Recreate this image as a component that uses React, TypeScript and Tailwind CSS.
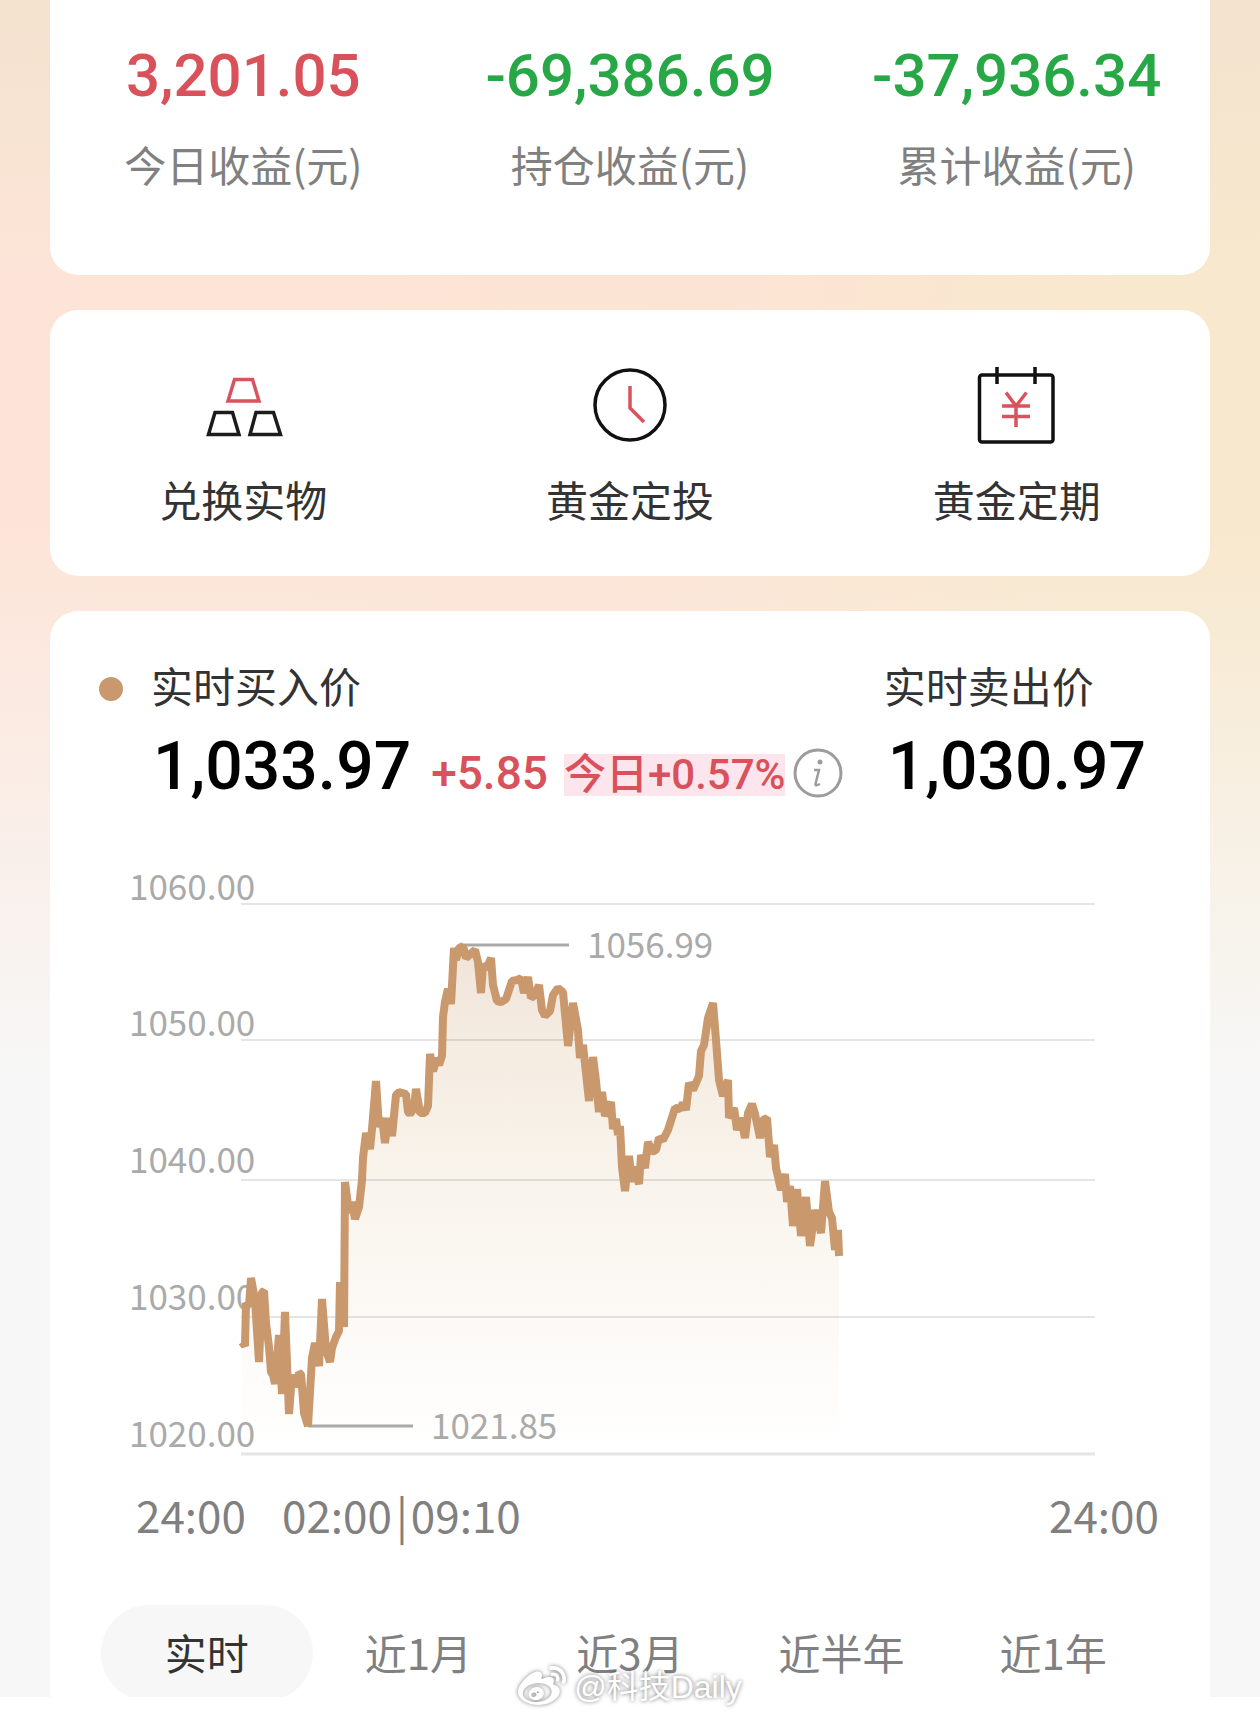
import { FaWeibo } from "react-icons/fa";

const stats = [
  { label: "今日收益(元)", value: "3,201.05", color: "text-[#d9515a]" },
  { label: "持仓收益(元)", value: "-69,386.69", color: "text-[#27a745]" },
  { label: "累计收益(元)", value: "-37,936.34", color: "text-[#27a745]" },
];

const ranges = ["实时", "近1月", "近3月", "近半年", "近1年"];

// y is the grid line, textY the baseline of its label
const gridLines = [
  { label: "1060.00", y: 904, textY: 900 },
  { label: "1050.00", y: 1040, textY: 1036 },
  { label: "1040.00", y: 1180, textY: 1173 },
  { label: "1030.00", y: 1317, textY: 1310 },
  { label: "1020.00", y: 1454, textY: 1447 },
];

const priceLine =
  "242,1342 245,1346 246,1303 249,1306 251,1278 255,1300 259,1362 262,1292 264,1291 266,1323 269,1347 271,1372 273,1375 275,1384 " +
  "279,1335 282,1394 285,1312 289,1414 292,1375 296,1387 299,1373 301,1374 304,1413 308,1426 312,1358 315,1343 319,1366 322,1299 " +
  "326,1350 330,1362 332,1348 336,1337 339,1331 340,1282 344,1327 345,1182 349,1213 352,1202 355,1219 359,1207 362,1180 363,1158 " +
  "366,1133 370,1149 372,1129 376,1081 379,1127 382,1118 385,1143 388,1118 392,1136 396,1095 399,1092 406,1094 408,1112 410,1114 " +
  "414,1108 416,1089 420,1113 425,1113 428,1106 430,1054 433,1071 437,1058 439,1065 442,1056 443,1017 445,1002 448,989 451,1004 " +
  "454,948 456,960 459,948 463,946 466,958 475,950 478,962 481,993 483,965 487,968 491,958 493,985 497,1001 501,1002 506,999 " +
  "512,981 517,980 521,978 524,993 528,977 531,998 535,995 539,985 542,1010 545,1016 550,1011 553,995 558,988 563,992 568,1046 " +
  "573,1003 578,1030 580,1058 583,1045 586,1073 589,1101 593,1057 596,1081 599,1112 602,1092 605,1116 611,1102 613,1129 616,1119 " +
  "618,1135 620,1126 622,1167 625,1191 629,1156 632,1182 634,1167 639,1184 641,1155 645,1168 648,1142 652,1152 656,1150 659,1138 " +
  "663,1140 668,1130 675,1108 680,1109 683,1103 686,1110 689,1083 693,1090 699,1076 701,1051 704,1045 708,1018 713,1003 716,1040 " +
  "719,1080 723,1096 728,1080 729,1118 734,1108 737,1130 741,1118 745,1138 748,1113 752,1104 755,1114 760,1138 763,1120 767,1118 " +
  "770,1157 774,1145 776,1168 781,1190 785,1174 787,1202 790,1186 793,1226 797,1189 801,1236 806,1197 810,1246 815,1210 821,1233 " +
  "825,1181 829,1212 832,1218 835,1250 838,1230 839,1256";

function GoldBarsIcon() {
  return (
    <svg viewBox="0 0 88 88" className="h-[88px] w-[88px]" fill="none" strokeWidth="3.5">
      <path d="M35.500 18.500H53.500L60 40H29Z" stroke="#d9535f" />
      <path d="M16 51.500H33.500L40 73.500H9.500Z" stroke="#1c1c1c" />
      <path d="M57 51.500H74.500L81.500 73.500H51Z" stroke="#1c1c1c" />
    </svg>
  );
}

function ClockIcon() {
  return (
    <svg viewBox="0 0 88 88" className="h-[88px] w-[88px]" fill="none" strokeWidth="3.5">
      <circle cx="44" cy="44" r="35" stroke="#111" />
      <path d="M44 25V47L58 61" stroke="#d9535f" />
    </svg>
  );
}

function CalendarIcon() {
  return (
    <svg viewBox="0 0 88 88" className="h-[88px] w-[88px]" fill="none" strokeWidth="3.5">
      <rect x="6.5" y="14" width="73.500" height="67" rx="2.500" stroke="#111" />
      <path d="M24 6V23M62 6V23" stroke="#111" />
      <path d="M33 31.500L43 45L53.500 31.500M43 45V66M29 45H57M29 55.500H57" stroke="#d9535f" />
    </svg>
  );
}

function InfoIcon() {
  return (
    <svg viewBox="0 0 50 50" className="h-[50px] w-[50px]" fill="none" stroke="#9c9c9c">
      <circle cx="25" cy="25" r="23" strokeWidth="3" />
      <circle cx="27" cy="14" r="2.5" fill="#9c9c9c" stroke="none" />
      <path d="M21 22H26L22.500 36Q22 38.500 27 36" strokeWidth="2.500" />
    </svg>
  );
}

const actions = [
  { label: "兑换实物", icon: <GoldBarsIcon /> },
  { label: "黄金定投", icon: <ClockIcon /> },
  { label: "黄金定期", icon: <CalendarIcon /> },
];

function PriceChart() {
  return (
    <svg
      viewBox="50 850 1160 700"
      className="block w-full font-['Noto_Sans_CJK_SC',sans-serif]"
      role="img"
      aria-label="实时金价走势"
    >
      <defs>
        <linearGradient id="area" x1="0" y1="945" x2="0" y2="1453" gradientUnits="userSpaceOnUse">
          <stop offset="0" stopColor="#c9986d" stopOpacity="0.26" />
          <stop offset="0.5" stopColor="#d2b078" stopOpacity="0.13" />
          <stop offset="1" stopColor="#d9b080" stopOpacity="0" />
        </linearGradient>
      </defs>

      <g fontSize="35" fill="#aaaaaa">
        {gridLines.map((line) => (
          <text key={line.label} x="129" y={line.textY}>
            {line.label}
          </text>
        ))}
        <text x="587" y="958">1056.99</text>
        <text x="431" y="1439">1021.85</text>
      </g>

      <polygon points={`241,1453 ${priceLine} 839,1453`} fill="url(#area)" />

      {gridLines.map((line, i) => (
        <line
          key={line.label}
          x1="241"
          x2="1095"
          y1={line.y}
          y2={line.y}
          stroke="#000"
          strokeOpacity="0.1"
          strokeWidth={i === 4 ? 3 : 2}
        />
      ))}

      <path d="M464 945H569M308 1426H413" stroke="#a9a9a9" strokeWidth="3" />
      <polyline points={priceLine} fill="none" stroke="#c9986d" strokeWidth="8" strokeLinejoin="bevel" />

      {/* Time axis */}
      <g fontSize="44" fill="#808080">
        <text x="136" y="1533">24:00</text>
        <text x="282" y="1533">
          02:00<tspan dx="4">|</tspan><tspan dx="3">09:10</tspan>
        </text>
        <text x="1049" y="1533">24:00</text>
      </g>
    </svg>
  );
}

export default function App() {
  return (
    <div className="relative bg-white font-['Noto_Sans_CJK_SC',sans-serif]">
      <main className="bg-[linear-gradient(to_bottom,transparent_0,transparent_520px,#f7f7f7_1080px),linear-gradient(to_bottom,#f3e3cf_0,#f3e3cf00_280px),linear-gradient(100deg,#fde4d8_0%,#fce4d4_50%,#f8e8cd_75%)] px-[50px]">
        {/* Earnings */}
        <dl className="grid h-[275px] grid-cols-3 rounded-b-[28px] bg-white pt-10 text-center">
          {stats.map((item) => (
            <div key={item.label} className="flex flex-col-reverse justify-end">
              <dt className="mt-1 text-[42px] leading-[96px] text-[#808080]">{item.label}</dt>
              <dd className={`font-['Roboto',sans-serif] text-[60px] leading-[72px] font-medium ${item.color}`}>
                {item.value}
              </dd>
            </div>
          ))}
        </dl>

        {/* Shortcuts */}
        <nav className="mt-[35px] grid h-[266px] grid-cols-3 rounded-[28px] bg-white pt-[51px]">
          {actions.map((item) => (
            <button key={item.label} type="button" className="flex flex-col items-center">
              {item.icon}
              <span className="mt-[18px] text-[42px] leading-[64px] text-[#333]">{item.label}</span>
            </button>
          ))}
        </nav>

        {/* Live price */}
        <section className="mt-[35px] rounded-t-[28px] bg-white pt-[42px]">
          <div className="flex justify-between pr-[64px] pl-[49px]">
            <div>
              <div className="flex items-center">
                <span className="mt-2 h-6 w-6 rounded-full bg-[#c9986d]"></span>
                <h2 className="ml-7 text-[42px] leading-[64px] text-[#333]">实时买入价</h2>
              </div>
              <div className="mt-1 ml-[54px] flex items-baseline font-['Roboto','Noto_Sans_CJK_SC',sans-serif] font-medium text-[#d9515a]">
                <span className="text-[66px] leading-[92px] text-black">1,033.97</span>
                <span className="ml-5 text-[46px]">+5.85</span>
                <span className="ml-4 bg-[#fce5ec] text-[42px] leading-[42px]">今日+0.57%</span>
                <button type="button" aria-label="说明" className="mt-3 ml-2 self-center">
                  <InfoIcon />
                </button>
              </div>
            </div>
            <div>
              <h2 className="text-[42px] leading-[64px] text-[#333]">实时卖出价</h2>
              <p className="mt-1 pl-1 font-['Roboto',sans-serif] text-[66px] leading-[92px] font-medium">1,030.97</p>
            </div>
          </div>

          <div className="mt-[37px]">
            <PriceChart />
          </div>

          <div className="mt-[55px] grid h-[92px] grid-cols-5 overflow-hidden px-[51px]">
            {ranges.map((range, i) => (
              <button
                key={range}
                type="button"
                className={`h-24 rounded-full pb-1 text-[42px] ${i === 0 ? "bg-[#f7f7f7] text-[#333]" : "text-[#808080]"}`}
              >
                {range}
              </button>
            ))}
          </div>
        </section>
      </main>
      <div className="h-6"></div>

      {/* Watermark */}
      <div className="absolute inset-x-0 bottom-2.5 flex items-center justify-center gap-2 text-white">
        <FaWeibo className="h-12 w-12 drop-shadow-[0_0_2px_#00000080]" />
        <span className="font-['Liberation_Sans','Noto_Sans_CJK_SC',sans-serif] text-[32px] leading-[48px] [text-shadow:0_0_4px_#00000090]">
          @科技Daily
        </span>
      </div>
    </div>
  );
}
